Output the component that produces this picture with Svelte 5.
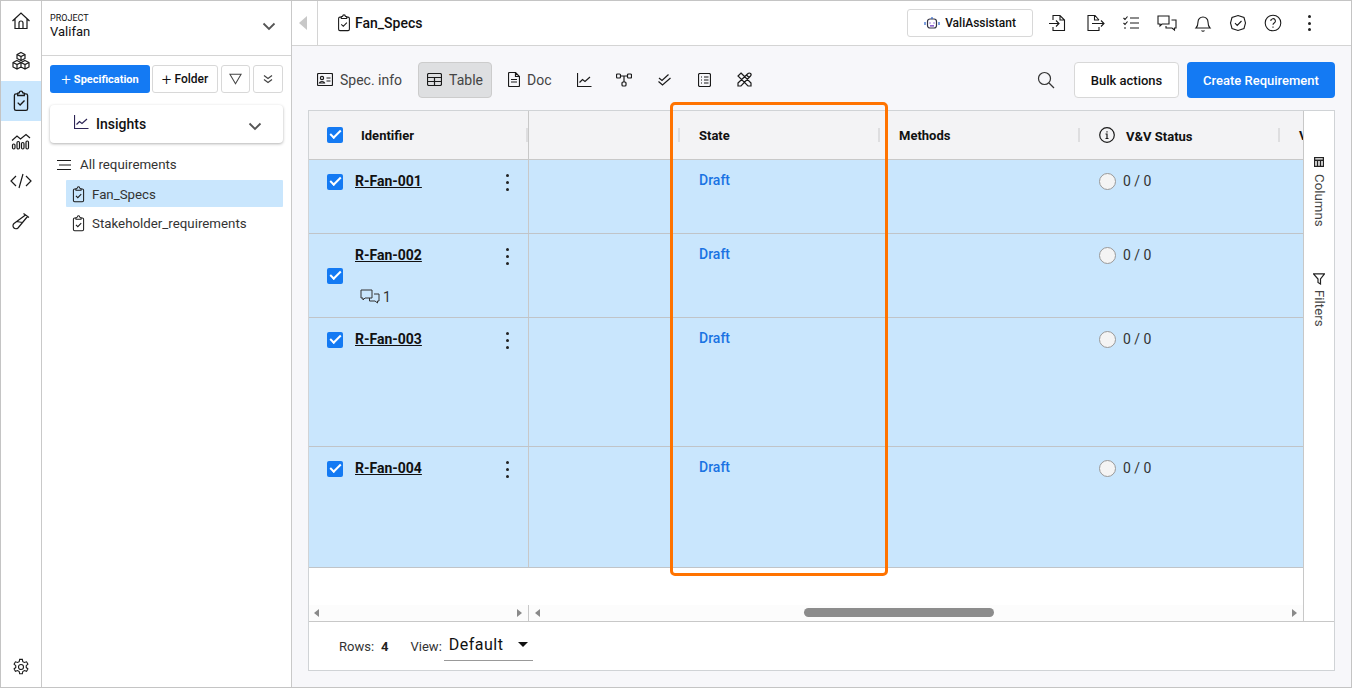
<script>
  const rows = [
    { id: 'R-Fan-001', height: 74 },
    { id: 'R-Fan-002', height: 84, comments: 1 },
    { id: 'R-Fan-003', height: 129 },
    { id: 'R-Fan-004', height: 121 }
  ];

  const clipPath = 'M7 3.500H5.500A1.500 1.500 0 0 0 4 5v12a1.500 1.500 0 0 0 1.500 1.500h9A1.500 1.500 0 0 0 16 17V5a1.500 1.500 0 0 0-1.500-1.500H13M7 5V3l1.500-.5a1.500 1.500 0 0 1 3 0L13 3v2zM7 11.500l2.200 2.200 4-4.200';
</script>

<div class="app">
  <!-- icon rail -->
  <nav class="rail">
    <div class="rail-top">
      <button class="rail-btn" aria-label="Home">
        <svg width="20" height="20" viewBox="0 0 20 20"><path d="M1.500 10 10 2l8.500 8M4 8v9.500h12V8M8 17.500v-5.500a2 2 0 0 1 4 0v5.500"/></svg>
      </button>
      <button class="rail-btn" aria-label="Products">
        <svg width="20" height="20" viewBox="0 0 20 20"><path d="M10 1.500 14 3.500v4L10 9.500 6 7.500v-4zM6 3.500l4 2 4-2M10 5.500v4M6 9.500l4 2v4.500l-4 2-4-2v-4.500zM2 11.500l4 2 4-2M6 13.500v4.500M14 9.500l4 2v4.500l-4 2-4-2v-4.500zM10 11.500l4 2 4-2M14 13.500v4.500"/></svg>
      </button>
      <button class="rail-btn active" aria-label="Requirements">
        <svg width="22" height="22" viewBox="0 0 20 20"><path d={clipPath}/></svg>
      </button>
      <button class="rail-btn" aria-label="Analytics">
        <svg width="20" height="20" viewBox="0 0 20 20"><path d="M1 9.500 6 5l3.500 3L15 3.500 19 7"/><rect x="1.500" y="13" width="2.500" height="5" rx="1.200"/><rect x="6" y="10.500" width="2.500" height="7.500" rx="1.200"/><rect x="10.500" y="11.500" width="2.500" height="6.500" rx="1.200"/><rect x="15" y="10" width="2.500" height="8" rx="1.200"/></svg>
      </button>
      <button class="rail-btn" aria-label="Code">
        <svg width="22" height="20" viewBox="0 0 22 20"><path d="M6 5 1 10l5 5M16 5l5 5-5 5M13 3 9 17"/></svg>
      </button>
      <button class="rail-btn" aria-label="Test">
        <svg width="20" height="20" viewBox="0 0 20 20"><path d="M12.500 2.500 18 6.500M14.500 4 3 12.500a3 3 0 0 0 4 4.500L16.500 5.500M5.500 10.500l6 1"/></svg>
      </button>
    </div>
    <button class="rail-btn settings" aria-label="Settings">
      <svg width="18" height="18" viewBox="0 0 20 20"><circle cx="10" cy="10" r="2.800"/><path d="M8.500 1.500h3l.5 2.500 1.800 1 2.400-.8 1.500 2.600-1.900 1.700v2l1.900 1.700-1.500 2.600-2.400-.8-1.800 1-.5 2.500h-3l-.5-2.500-1.800-1-2.400.8-1.500-2.600 1.900-1.700v-2L2.300 6.800l1.500-2.600 2.400.8 1.800-1z"/></svg>
    </button>
  </nav>

  <!-- project panel -->
  <aside class="panel">
    <div class="project">
      <div>
        <div class="project-label">PROJECT</div>
        <div class="project-name">Valifan</div>
      </div>
      <svg class="chev" width="14" height="9" viewBox="0 0 14 9"><path d="M1.500 1.500 7 7l5.500-5.500"/></svg>
    </div>

    <div class="panel-actions">
      <button class="btn-spec"><span class="plus">+</span>Specification</button>
      <button class="btn-small btn-folder"><span class="plus">+</span>Folder</button>
      <button class="btn-small btn-icon" aria-label="Filter">
        <svg width="13" height="12" viewBox="0 0 15 14"><path d="M1 1.500h13L7.500 12.500z"/></svg>
      </button>
      <button class="btn-small btn-icon narrow" aria-label="Collapse">
        <svg width="10" height="10" viewBox="0 0 10 10"><path d="M1 1.500 5 4.500l4-3M1 5.500 5 8.500l4-3"/></svg>
      </button>
    </div>

    <div class="insights">
      <svg class="ins-ico" width="15" height="14" viewBox="0 0 15 14"><path d="M.5 0v13.500h14M2.500 9.500l3-3 2.500 2 5-4.500"/></svg>
      <span class="ins-text">Insights</span>
      <svg class="chev" width="14" height="9" viewBox="0 0 14 9"><path d="M1.500 1.500 7 7l5.500-5.500"/></svg>
    </div>

    <div class="tree">
      <div class="tree-root">
        <svg width="15" height="12" viewBox="0 0 15 12"><path d="M1 1.500h14M3 6h12M1 10.500h14"/></svg>
        <span>All requirements</span>
      </div>
      <div class="tree-item selected">
        <svg width="17" height="17" viewBox="0 0 20 20"><path d={clipPath}/></svg>
        <span>Fan_Specs</span>
      </div>
      <div class="tree-item">
        <svg width="17" height="17" viewBox="0 0 20 20"><path d={clipPath}/></svg>
        <span>Stakeholder_requirements</span>
      </div>
    </div>
  </aside>

  <main class="main">
    <header class="topbar">
      <div class="collapse"><span class="tri-left"></span></div>
      <div class="crumb">
        <svg width="18" height="18" viewBox="0 0 20 20"><path d={clipPath}/></svg>
        <span>Fan_Specs</span>
      </div>
      <div class="top-actions">
        <button class="assistant">
          <svg width="16" height="14" viewBox="0 0 16 14"><rect x="3.500" y="3" width="9" height="9" rx="2.500" stroke="#334"/><path d="M8 3V1M1 6v3M15 6v3" stroke="#2a62c9"/><path d="M6 6.500v1M10 6.500v1M6 9.800h4" stroke="#6a35c0"/></svg>
          ValiAssistant
        </button>
        <div class="top-icons">
          <svg width="20" height="20" viewBox="0 0 20 20"><path d="M5 7V2.500h7L16.500 7v10.500H5V14M12 2.500V7h4.500M1 10.500h10M8 7.500l3 3-3 3"/></svg>
          <svg width="20" height="20" viewBox="0 0 20 20"><path d="M14 7 10 2.500H3v15h11V14M9.500 2.500V7H14M7 10.500h12M16 7.500l3 3-3 3"/></svg>
          <svg width="18" height="18" viewBox="0 0 18 18"><path d="M1.500 4 3 5.500 5.500 2.500M1.500 9 3 10.500 5.500 7.500M2 14h2M8 4h9M8 9h9M8 14h9"/></svg>
          <svg width="20" height="18" viewBox="0 0 20 18"><path d="M1 2h11v8H5l-2 2v-2H1zM14.500 6H19v8h-1.500v2l-2.500-2h-6v-2"/></svg>
          <svg width="18" height="20" viewBox="0 0 18 20"><path d="M2 15c1.500-1.500 2-2.500 2-6a5 5 0 0 1 10 0c0 3.500.5 4.500 2 6zM7.500 17.500a2 2 0 0 0 3 0"/></svg>
          <svg width="18" height="18" viewBox="0 0 18 18"><path d="M9 1.500 15 3.500l1.500 5.500-1.500 5.500-6 2-6-2L1.500 9 3 3.500zM6 9.200l2.200 2.200L12.500 7"/></svg>
          <svg width="18" height="18" viewBox="0 0 18 18"><circle cx="9" cy="9" r="7.800"/><path d="M6.800 7a2.300 2.300 0 1 1 3.400 2c-.8.500-1.200 1-1.200 1.800M9 12.500v1.200"/></svg>
          <span class="kebab top-kebab"><i></i><i></i><i></i></span>
        </div>
      </div>
    </header>

    <div class="content">
      <div class="toolbar">
        <button class="tab first">
          <svg width="16" height="13" viewBox="0 0 16 13"><rect x=".5" y=".5" width="15" height="12" rx="1"/><circle cx="5" cy="5" r="1.600"/><path d="M2.500 10c.5-2 4.500-2 5 0zM9.500 5h4M9.500 8h4"/></svg>
          Spec. info
        </button>
        <button class="tab current">
          <svg width="15" height="13" viewBox="0 0 15 13"><rect x=".5" y=".5" width="14" height="12" rx="1.500"/><path d="M.5 4.500h14M.5 8.500h14M7.500 4.500v8"/></svg>
          Table
        </button>
        <button class="tab doc">
          <svg width="12" height="15" viewBox="0 0 12 15"><path d="M7.500.5H1.500a1 1 0 0 0-1 1v12a1 1 0 0 0 1 1h9a1 1 0 0 0 1-1V4.500zM7.500.5v4h4M3 7.500h6M3 10h6"/></svg>
          Doc
        </button>
        <button class="tab ico" aria-label="Chart">
          <svg width="15" height="14" viewBox="0 0 15 14"><path d="M.5 0v13.500h14M2.500 9.500l3-3 2.500 2 5-4.500"/></svg>
        </button>
        <button class="tab ico" aria-label="Graph">
          <svg width="16" height="14" viewBox="0 0 16 14"><rect x=".5" y="1" width="4" height="4" rx="1"/><rect x="11.500" y="1" width="4" height="4" rx="1"/><rect x="6" y="9" width="4" height="4" rx="1"/><path d="M4.500 3h7M8 3v6"/></svg>
        </button>
        <button class="tab ico" aria-label="Checks">
          <svg width="13" height="12" viewBox="0 0 13 12"><path d="M1 4l3 2.500L10.500.5M.5 7.500 4.500 11 12.500 4"/></svg>
        </button>
        <button class="tab ico" aria-label="List">
          <svg width="13" height="14" viewBox="0 0 13 14"><rect x=".5" y=".5" width="12" height="13" rx="1.500"/><path d="M3 4h1M6 4h4.500M3 7h1M6 7h4.500M3 10h1M6 10h4.500"/></svg>
        </button>
        <button class="tab ico" aria-label="Design">
          <svg width="15" height="15" viewBox="0 0 15 15"><path d="M1 11 11 1.500a1.500 1.500 0 0 1 2.500 2.500L4 14H1zM9.500 3l2.500 2.500M4 1 14 11l0 3h-3L1 4z"/></svg>
        </button>
        <div class="toolbar-right">
          <svg class="search" width="18" height="18" viewBox="0 0 18 18"><circle cx="7.500" cy="7.500" r="6"/><path d="m12 12 5 5"/></svg>
          <button class="btn-bulk">Bulk actions</button>
          <button class="btn-create">Create Requirement</button>
        </div>
      </div>

      <section class="grid-card">
        <div class="grid-top">
          <div class="grid-body">
            <div class="head-row">
              <div class="col-pin head-cell">
                <span class="check"></span>
                <span class="head-id">Identifier</span>
                <span class="sep end"></span>
              </div>
              <div class="col-blank"><span class="sep end"></span></div>
              <div class="col-std head-cell pad"><span>State</span><span class="sep end"></span></div>
              <div class="col-std head-cell pad"><span>Methods</span><span class="sep end"></span></div>
              <div class="col-std head-cell vv">
                <svg width="16" height="16" viewBox="0 0 16 16"><circle cx="8" cy="8" r="7.300"/><path d="M6.500 7H8v4.500M6.500 11.500h3M8 4.300v1.200"/></svg>
                <span>V&amp;V Status</span><span class="sep end"></span>
              </div>
              <div class="col-std head-cell pad next"><span>V</span></div>
            </div>

            {#each rows as row}
              <div class="row" style="height: {row.height}px">
                <div class="col-pin cell-id" class:centered={row.comments}>
                  <span class="check"></span>
                  <div class="id-wrap">
                    <a href="#top" class="req-link">{row.id}</a>
                    {#if row.comments}
                      <div class="comments">
                        <svg width="20" height="16" viewBox="0 0 20 16"><path d="M1 1h11v8H5l-2 2V9H1zM14 5h5v7h-1.500v2L15 12H9.500v-3"/></svg>
                        {row.comments}
                      </div>
                    {/if}
                  </div>
                  <span class="kebab row-kebab"><i></i><i></i><i></i></span>
                </div>
                <div class="col-blank"></div>
                <div class="col-std cell pad"><span class="draft">Draft</span></div>
                <div class="col-std cell pad"></div>
                <div class="col-std cell vv-cell"><span class="radio"></span><span class="count">0 / 0</span></div>
              </div>
            {/each}

            <div class="grid-spacer"></div>
            <div class="scrollbars">
              <div class="scroll-pin">
                <span class="arrow left"></span>
                <span class="arrow right"></span>
              </div>
              <div class="scroll-center">
                <span class="arrow left"></span>
                <span class="thumb"></span>
                <span class="arrow right"></span>
              </div>
            </div>
          </div>

          <div class="side-tabs">
            <div class="side-tab cols">
              <svg width="10" height="10" viewBox="0 0 10 10"><path d="M.5.500h9v9h-9zM.5 3.300h9M3.500 3.300v6.200M6.500 3.300v6.200"/></svg>
              <span>Columns</span>
            </div>
            <div class="side-tab filt">
              <svg width="12" height="12" viewBox="0 0 12 12"><path d="M.5.800h11L7.500 6v5L5 9.500V6z"/></svg>
              <span>Filters</span>
            </div>
          </div>
        </div>

        <footer class="grid-foot">
          <span class="foot-label">Rows:</span>
          <b class="foot-count">4</b>
          <span class="foot-label view">View:</span>
          <div class="view-select">
            <span>Default</span>
            <span class="tri-down"></span>
          </div>
        </footer>
      </section>
    </div>
  </main>

  <div class="highlight"></div>
</div>

<style>
  :global(body) {
    margin: 0;
    background: #fff;
  }

  .app {
    position: relative;
    display: flex;
    box-sizing: border-box;
    width: 1352px;
    height: 688px;
    overflow: hidden;
    border: 1px solid #c4c4c4;
    font-family: Roboto, "Liberation Sans", sans-serif;
    color: #111;
    background: #fff;
  }

  button {
    font-family: inherit;
    cursor: pointer;
  }

  svg {
    fill: none;
    stroke: #1a1a1a;
    stroke-width: 1.2;
    flex: none;
  }

  /* rail */
  .rail {
    width: 40px;
    flex: none;
    display: flex;
    flex-direction: column;
    justify-content: space-between;
    border-right: 1px solid #c9c9c9;
  }

  .rail-btn {
    display: flex;
    align-items: center;
    justify-content: center;
    width: 100%;
    height: 40px;
    border: 0;
    padding: 0;
    background: none;
  }

  .rail-btn.active {
    background: #c9e6fd;
  }

  .settings {
    height: 36px;
    margin-bottom: 2px;
  }

  /* project panel */
  .panel {
    width: 249px;
    flex: none;
    border-right: 1px solid #c9c9c9;
    display: flex;
    flex-direction: column;
  }

  .project {
    height: 55px;
    box-sizing: border-box;
    padding: 11px 15px 0 8px;
    display: flex;
    justify-content: space-between;
    align-items: flex-start;
    border-bottom: 1px solid #d4d4d4;
  }

  .project-label {
    font-size: 9px;
    line-height: 11px;
    margin-top: 1px;
  }

  .project-name {
    font-size: 13px;
    line-height: 15px;
  }

  .project .chev {
    margin: 10px 0 0;
  }

  .chev {
    stroke: #555;
    stroke-width: 1.800;
  }

  .panel-actions {
    display: flex;
    gap: 2px;
    padding: 9px 0 0 8px;
  }

  .btn-spec {
    display: flex;
    align-items: center;
    justify-content: center;
    width: 100px;
    height: 28px;
    border: 0;
    border-radius: 3px;
    background: #147af3;
    color: #fff;
    font-size: 11px;
    font-weight: 700;
    padding: 0;
  }

  .plus {
    font-size: 17px;
    font-weight: 300;
    line-height: 16px;
    margin-right: 3px;
  }

  .btn-small {
    height: 28px;
    box-sizing: border-box;
    border: 1px solid #d8d8d8;
    border-radius: 3px;
    background: #fff;
    padding: 0;
    font-size: 12px;
    font-weight: 500;
    color: #111;
  }

  .btn-folder {
    display: flex;
    align-items: center;
    justify-content: center;
    width: 66px;
  }

  .btn-icon {
    width: 29px;
    margin-left: 1px;
    display: flex;
    align-items: center;
    justify-content: center;
  }

  .btn-icon.narrow {
    width: 30px;
  }

  .btn-icon svg {
    stroke: #444;
  }

  .insights {
    margin: 12px 8px 0;
    height: 38px;
    border-radius: 4px;
    display: flex;
    align-items: center;
    padding: 0 21px 0 24px;
    background: #fff;
    box-shadow: 0 1px 3px rgba(0, 0, 0, 0.3);
  }

  .insights .chev {
    margin-top: 4px;
  }

  .ins-ico {
    stroke: #2c2455;
    margin-top: -4px;
  }

  .ins-text {
    font-size: 14px;
    font-weight: 500;
    margin-left: 7px;
    flex: 1;
  }

  .tree {
    padding-top: 6px;
    font-size: 13.300px;
    color: #333;
  }

  .tree-root {
    display: flex;
    align-items: center;
    gap: 9px;
    height: 31px;
    padding-left: 14px;
  }

  .tree-item {
    display: flex;
    align-items: center;
    gap: 5px;
    box-sizing: border-box;
    height: 27px;
    margin: 0 8px 2px 24px;
    padding: 2px 0 0 4px;
    border-radius: 1px;
  }

  .tree-item.selected {
    background: #c9e6fd;
  }

  /* main */
  .main {
    flex: 1;
    min-width: 0;
    display: flex;
    flex-direction: column;
  }

  .topbar {
    height: 45px;
    flex: none;
    box-sizing: border-box;
    display: flex;
    align-items: center;
    border-bottom: 1px solid #d4d4d4;
  }

  .collapse {
    width: 26px;
    height: 44px;
    box-sizing: border-box;
    border-right: 1px solid #d4d4d4;
    display: flex;
    align-items: center;
    padding-left: 7px;
  }

  .tri-left {
    border-style: solid;
    border-width: 7px 8px 7px 0;
    border-color: transparent #c8c8c8 transparent transparent;
  }

  .crumb {
    display: flex;
    align-items: center;
    gap: 2px;
    margin-left: 17px;
    font-size: 14px;
    font-weight: 500;
  }

  .top-actions {
    margin-left: auto;
    display: flex;
    align-items: center;
  }

  .assistant {
    display: flex;
    align-items: center;
    justify-content: center;
    gap: 5px;
    width: 126px;
    height: 28px;
    border: 1px solid #d8d8d8;
    border-radius: 3px;
    background: #fff;
    font-size: 12px;
    font-weight: 500;
    color: #111;
    padding: 0;
  }

  .top-icons {
    display: flex;
    align-items: center;
    gap: 17px;
    margin: 0 40px 0 15px;
  }

  .top-icons svg {
    stroke-width: 1.100;
  }

  .kebab {
    display: inline-flex;
    flex-direction: column;
    gap: 4px;
  }

  .kebab i {
    width: 3px;
    height: 3px;
    border-radius: 50%;
    background: #222;
  }

  .top-kebab {
    gap: 3.500px;
    margin-left: 9px;
  }

  .content {
    flex: 1;
    min-height: 0;
    display: flex;
    flex-direction: column;
    background: #f7f7fa;
    padding: 0 16px 16px;
  }

  .toolbar {
    height: 64px;
    flex: none;
    box-sizing: border-box;
    display: flex;
    align-items: center;
    padding-top: 3px;
  }

  .tab {
    display: inline-flex;
    align-items: center;
    gap: 7px;
    height: 36px;
    border: 1px solid transparent;
    border-radius: 4px;
    background: none;
    padding: 0 8px;
    color: #444;
    font-size: 14px;
  }

  .tab.first {
    margin-right: 7px;
  }

  .tab.current {
    background: #dedfe1;
    border-color: #ccc;
    margin-right: 7px;
  }

  .tab.doc {
    margin-right: 10px;
  }

  .tab.ico {
    width: 28px;
    justify-content: center;
    padding: 0;
    margin-right: 12px;
  }

  .toolbar-right {
    margin-left: auto;
    display: flex;
    align-items: center;
  }

  .search {
    margin-right: 19px;
    stroke: #333;
  }

  .btn-bulk {
    width: 105px;
    height: 36px;
    border: 1px solid #d8d8d8;
    border-radius: 4px;
    background: #fff;
    font-size: 13px;
    font-weight: 500;
    color: #111;
    padding: 2px 0 0;
  }

  .btn-create {
    width: 148px;
    height: 36px;
    margin-left: 8px;
    border: 0;
    border-radius: 4px;
    background: #147af3;
    color: #fff;
    font-size: 13px;
    font-weight: 500;
    padding: 2px 0 0;
  }

  /* table */
  .grid-card {
    flex: 1;
    min-height: 0;
    display: flex;
    flex-direction: column;
    border: 1px solid #d0d3d6;
    background: #fff;
  }

  .grid-top {
    flex: 1;
    min-height: 0;
    display: flex;
    border-bottom: 1px solid #c8c8c8;
  }

  .grid-body {
    flex: 1;
    min-width: 0;
    display: flex;
    flex-direction: column;
    overflow: hidden;
    border-right: 1px solid #c8c8c8;
  }

  .head-row {
    height: 49px;
    flex: none;
    box-sizing: border-box;
    display: flex;
    background: #f3f3f5;
    border-bottom: 1px solid #c8c8c8;
    font-size: 13px;
    font-weight: 700;
  }

  .row {
    flex: none;
    box-sizing: border-box;
    display: flex;
    background: #c9e6fd;
    border-bottom: 1px solid #c0c4c8;
    font-size: 14px;
  }

  .col-pin {
    width: 220px;
    flex: none;
    box-sizing: border-box;
    position: relative;
    border-right: 1px solid #c8c8c8;
  }

  .col-blank {
    width: 150px;
    flex: none;
    position: relative;
    display: flex;
    align-items: center;
  }

  .col-std {
    width: 200px;
    flex: none;
    box-sizing: border-box;
    position: relative;
  }

  .head-cell {
    display: flex;
    align-items: center;
  }

  .head-cell.pad,
  .cell.pad {
    padding-left: 20px;
  }

  .head-cell.vv {
    padding-left: 20px;
    gap: 11px;
  }

  .head-cell.vv span {
    position: relative;
    top: 1px;
  }

  .sep {
    position: absolute;
    right: -1px;
    top: 17px;
    width: 2px;
    height: 14px;
    background: #dedee0;
  }

  .head-cell.vv span.sep {
    position: absolute;
    top: 17px;
  }

  .head-row .col-pin {
    padding-left: 18px;
  }

  .head-row .col-pin .sep {
    right: 0;
  }

  .head-id {
    margin-left: 18px;
  }

  .check {
    position: relative;
    display: inline-block;
    flex: none;
    width: 16px;
    height: 16px;
    border-radius: 2px;
    background: #147af3;
  }

  .check::after {
    content: "";
    position: absolute;
    left: 3px;
    top: 3px;
    width: 9px;
    height: 4px;
    border-left: 2px solid #fff;
    border-bottom: 2px solid #fff;
    transform: rotate(-45deg);
  }

  .cell-id {
    display: flex;
    align-items: flex-start;
    padding: 13px 0 0 18px;
  }

  .cell-id .check {
    margin-top: 1px;
  }

  .cell-id.centered .check {
    margin-top: 21px;
  }

  .cell-id .id-wrap {
    margin-left: 12px;
  }

  .req-link {
    color: #111;
    font-size: 14px;
    font-weight: 700;
    line-height: 16px;
    display: block;
  }

  .comments {
    display: flex;
    align-items: center;
    gap: 3px;
    margin: 26px 0 0 5px;
    font-size: 14px;
    color: #333;
    line-height: 16px;
  }

  .comments svg {
    stroke: #333;
    stroke-width: 1;
  }

  .row-kebab {
    position: absolute;
    right: 19px;
    top: 14px;
  }

  .cell {
    padding-top: 12px;
  }

  .draft {
    color: #1a73e3;
    font-weight: 500;
    font-size: 14px;
  }

  .vv-cell {
    display: flex;
    align-items: flex-start;
    padding-left: 20px;
    padding-top: 13px;
    gap: 7px;
  }

  .radio {
    width: 15px;
    height: 15px;
    border: 1px solid #999;
    border-radius: 50%;
    background: #f4f4f4;
  }

  .count {
    color: #333;
    line-height: 16px;
  }

  .grid-spacer {
    flex: 1;
  }

  .scrollbars {
    height: 16px;
    flex: none;
    display: flex;
    background: #fcfcfc;
  }

  .scroll-pin {
    width: 220px;
    box-sizing: border-box;
    flex: none;
    display: flex;
    justify-content: space-between;
    align-items: center;
    padding: 0 6px 0 5px;
    border-right: 1px solid #c8c8c8;
  }

  .scroll-center {
    flex: 1;
    position: relative;
    display: flex;
    justify-content: space-between;
    align-items: center;
    padding: 0 6px;
  }

  .arrow {
    border-style: solid;
    border-color: transparent;
  }

  .arrow.left {
    border-width: 4.500px 5px 4.500px 0;
    border-right-color: #8a8a8a;
  }

  .arrow.right {
    border-width: 4.500px 0 4.500px 5px;
    border-left-color: #8a8a8a;
  }

  .thumb {
    position: absolute;
    left: 275px;
    top: 3px;
    width: 190px;
    height: 9px;
    border-radius: 5px;
    background: #8c8c8c;
  }

  .side-tabs {
    width: 30px;
    flex: none;
    background: #fff;
  }

  .side-tab {
    display: flex;
    align-items: center;
    width: 100%;
    writing-mode: vertical-rl;
    font-size: 13.300px;
    color: #444;
  }

  .side-tab svg {
    stroke: #222;
  }

  .side-tab.cols svg {
    stroke-width: 1.500;
  }

  .side-tab.cols {
    gap: 7px;
    padding-top: 46px;
  }

  .side-tab.filt {
    gap: 5px;
    padding-top: 46px;
  }

  .grid-foot {
    height: 48px;
    flex: none;
    display: flex;
    align-items: center;
    padding-left: 30px;
    font-size: 13px;
    color: #333;
  }

  .foot-count {
    margin-left: 7px;
    font-size: 13px;
    color: #222;
  }

  .foot-label.view {
    margin-left: 22px;
  }

  .view-select {
    width: 89px;
    height: 30px;
    box-sizing: border-box;
    margin-left: 2px;
    padding: 0 5px 3px;
    display: flex;
    align-items: center;
    justify-content: space-between;
    border-bottom: 1px solid #999;
    font-size: 16px;
    letter-spacing: 0.5px;
    color: #111;
  }

  .tri-down {
    border-style: solid;
    border-width: 5px 5px 0;
    border-color: #111 transparent transparent;
  }

  /* annotation frame drawn over the table */
  .highlight {
    position: absolute;
    left: 669px;
    top: 101px;
    width: 218px;
    height: 474px;
    box-sizing: border-box;
    border: 3px solid #ff7300;
    border-radius: 5px;
    pointer-events: none;
  }
</style>
